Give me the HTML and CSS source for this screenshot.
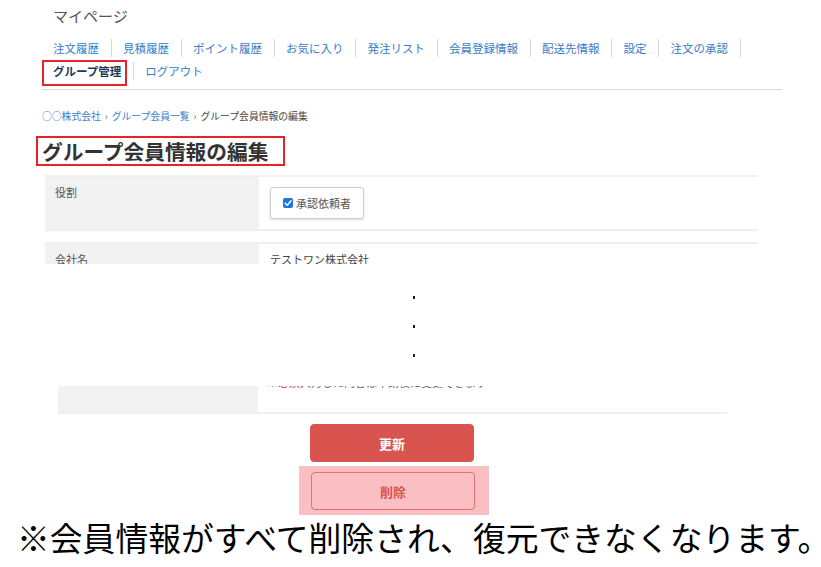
FILE: index.html
```html
<!DOCTYPE html>
<html lang="ja">
<head>
<meta charset="utf-8">
<title>マイページ</title>
<link rel="stylesheet" href="styles.css">
</head>
<body>
<div class="header">
  <div class="mypage">マイページ</div>
  <ul class="nav">
    <li class="nav-item"><a>注文履歴</a></li>
    <li class="nav-item"><a>見積履歴</a></li>
    <li class="nav-item"><a>ポイント履歴</a></li>
    <li class="nav-item"><a>お気に入り</a></li>
    <li class="nav-item"><a>発注リスト</a></li>
    <li class="nav-item"><a>会員登録情報</a></li>
    <li class="nav-item"><a>配送先情報</a></li>
    <li class="nav-item"><a>設定</a></li>
    <li class="nav-item"><a>注文の承認</a></li>
    <li class="nav-item nav-current"><a>グループ管理</a></li>
    <li class="nav-item nav-last"><a>ログアウト</a></li>
  </ul>
  <div class="breadcrumb"><a>○○株式会社</a><span class="sep">›</span><a>グループ会員一覧</a><span class="sep">›</span><span class="here">グループ会員情報の編集</span></div>
  <h1 class="title">グループ会員情報の編集</h1>
</div>

<div class="table-top">
  <div class="row">
    <div class="label">役割</div>
    <div class="value">
      <label class="check-btn">
        <svg class="check" width="10" height="10" viewBox="0 0 10 10"><rect x="0" y="0" width="10" height="10" rx="2" fill="#1a73e8"/><path d="M2.2 5.2 L4.2 7.2 L7.9 2.9" fill="none" stroke="#fff" stroke-width="1.6" stroke-linecap="round" stroke-linejoin="round"/></svg>
        <span>承認依頼者</span>
      </label>
    </div>
  </div>
  <div class="row row-second">
    <div class="label">会社名</div>
    <div class="value">テストワン株式会社</div>
  </div>
</div>

<div class="dots">
  <span class="dot"></span>
  <span class="dot"></span>
  <span class="dot"></span>
</div>

<div class="table-bottom">
  <div class="label"></div>
  <div class="value"><div class="cut-text"><span class="req">※必須</span>入力した内容は申請後に変更できます</div></div>
</div>

<div class="actions">
  <button class="btn btn-update">更新</button>
  <div class="highlight">
    <button class="btn btn-delete">削除</button>
  </div>
</div>

<p class="note">※会員情報がすべて削除され、復元できなくなります。</p>
</body>
</html>
```

FILE: styles.css
```css
* { box-sizing: border-box; }
html, body { margin: 0; padding: 0; background: #fff; }
body {
  font-family: "Noto Sans CJK JP", "Noto Sans", sans-serif;
  color: #333;
}
.header {
  margin-left: 42px;
  width: 740px;
}
.mypage {
  font-size: 15px;
  line-height: 20px;
  color: #555;
  padding-left: 11px;
  padding-top: 6px;
}
.nav {
  list-style: none;
  margin: 13px 0 0 0;
  padding: 0 0 4px 0;
  display: flex;
  flex-wrap: wrap;
  border-bottom: 1px solid #dcdcdc;
}
.nav-item {
  height: 18px;
  margin-bottom: 5px;
  padding: 0 11.5px 0 11px;
  border-right: 1px solid #d6d6d6;
  font-size: 11.5px;
  line-height: 18px;
  color: #3a7cc6;
  white-space: nowrap;
}
.nav-item:nth-child(n+2) { padding-left: 11.5px; }
.nav-last { border-right: none; }
.nav-current {
  position: relative;
  font-weight: bold;
  color: #22385e;
  padding-left: 11px !important;
}
.nav-current::after {
  content: "";
  position: absolute;
  left: 0;
  right: 6px;
  top: -2px;
  bottom: -6px;
  border: 2px solid #e8212b;
}
.breadcrumb {
  margin-top: 19px;
  font-size: 9.8px;
  line-height: 14px;
  color: #3a7cc6;
}
.breadcrumb .sep { color: #666; margin: 0 4px 0 4px; }
.breadcrumb .here { color: #444; }
.title {
  display: inline-block;
  margin: 13px 0 0 -6px;
  padding: 0 15px 0 4px;
  border: 2px solid #e8212b;
  font-size: 20.7px;
  line-height: 26px;
  font-weight: bold;
  color: #333;
}
.table-top {
  margin: 9px 0 0 45px;
  width: 713px;
  height: 89px;
  overflow: hidden;
}
.row {
  display: flex;
  border-top: 2px solid #efefef;
  border-bottom: 2px solid #efefef;
}
.row-second { margin-top: 11px; }
.label {
  width: 214px;
  flex: none;
  background: #f2f2f2;
  padding: 8px 10px;
  font-size: 11px;
  line-height: 15px;
  color: #555;
}
.value {
  flex: 1;
  padding: 8px 11px;
  font-size: 11px;
  line-height: 15px;
  color: #444;
}
.row:first-child .value { padding: 10px 11px; }
.check-btn {
  display: inline-flex;
  align-items: center;
  gap: 3px;
  height: 32px;
  padding: 0 12px 0 12px;
  border: 1px solid #cfcfcf;
  border-radius: 3px;
  box-shadow: 0 1px 2px rgba(0,0,0,0.15);
  font-size: 11px;
  color: #555;
  background: #fff;
}
.check { display: block; }
.dots {
  display: flex;
  flex-direction: column;
  gap: 26px;
  margin: 32px 0 0 413px;
  width: 2px;
}
.dot {
  display: block;
  width: 2px;
  height: 3px;
  background: #222;
}
.table-bottom {
  display: flex;
  margin: 29px 0 0 58px;
  width: 669px;
  height: 28px;
  border-bottom: 2px solid #efefef;
  overflow: hidden;
}
.table-bottom .label { width: 200px; padding: 0; }
.table-bottom .value { padding: 0 9px; overflow: hidden; }
.cut-text {
  margin-top: -11px;
  white-space: nowrap;
  color: #666;
}
.req { color: #e8212b; }
.actions {
  margin-top: 10px;
}
.btn {
  display: block;
  width: 164px;
  height: 38px;
  border-radius: 4px;
  font-family: "Noto Sans CJK JP", "Noto Sans", sans-serif;
  font-size: 13px;
  font-weight: bold;
  cursor: pointer;
}
.btn-update {
  margin-left: 310px;
  background: #d9534f;
  border: 1px solid #d9534f;
  color: #fff;
}
.highlight {
  margin: 4px 0 0 299px;
  width: 190px;
  height: 49px;
  padding: 6px 0 0 12px;
  background: #fabfc3;
}
.btn-delete {
  background: transparent;
  border: 1px solid #ea6f70;
  color: #d9534f;
}
.note {
  margin: 3px 0 0 17px;
  font-size: 32.8px;
  line-height: 38px;
  color: #000;
  white-space: nowrap;
}
```
